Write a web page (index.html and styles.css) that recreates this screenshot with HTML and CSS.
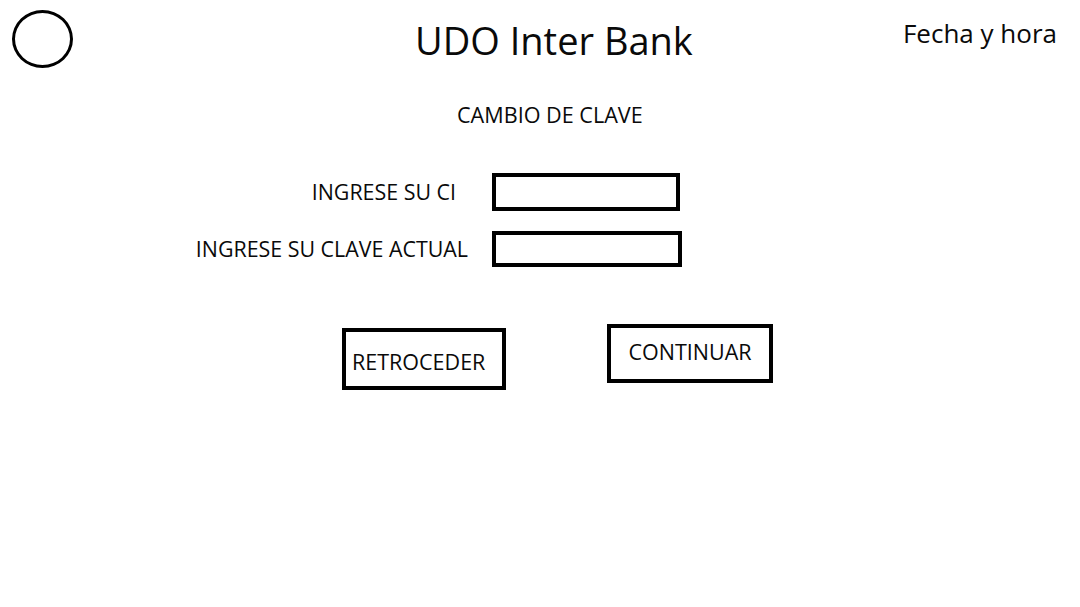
FILE: index.html
```html
<!DOCTYPE html>
<html lang="es">
<head>
<meta charset="utf-8">
<title>UDO Inter Bank</title>
<link rel="stylesheet" href="styles.css">
</head>
<body>
<div class="page">
  <header class="top">
    <div class="logo"></div>
    <h1 class="title">UDO Inter Bank</h1>
    <div class="datetime">Fecha y hora</div>
  </header>
  <h2 class="subtitle">CAMBIO DE CLAVE</h2>
  <form class="form">
    <label class="label label-ci" for="ci">INGRESE SU CI</label>
    <input class="field field-ci" id="ci" type="text">
    <label class="label label-clave" for="clave">INGRESE SU CLAVE ACTUAL</label>
    <input class="field field-clave" id="clave" type="password">
  </form>
  <div class="actions">
    <button class="btn btn-back" type="button">RETROCEDER</button>
    <button class="btn btn-next" type="button">CONTINUAR</button>
  </div>
</div>
</body>
</html>
```
FILE: styles.css
```css
* { box-sizing: border-box; }
html, body {
  margin: 0;
  padding: 0;
  background: #ffffff;
}
body {
  font-family: "Open Sans", "Noto Sans", sans-serif;
  color: #0a0a0a;
  width: 1080px;
  height: 607px;
  overflow: hidden;
}
.page {
  display: flex;
  flex-direction: column;
}
.top {
  display: flex;
  align-items: flex-start;
  height: 90px;
}
.logo {
  width: 61px;
  height: 58px;
  margin-left: 12px;
  margin-top: 10px;
  border: 3px solid #000;
  border-radius: 50%;
  flex: none;
}
.title {
  margin: 12px 0 0 342px;
  font-size: 38px;
  font-weight: 400;
  line-height: 56px;
  white-space: nowrap;
}
.datetime {
  margin: 16px 23px 0 auto;
  font-size: 26px;
  line-height: 34px;
  white-space: nowrap;
}
.subtitle {
  margin: 11px 0 0 457px;
  font-size: 21.6px;
  font-weight: 400;
  line-height: 28px;
}
.form {
  display: grid;
  grid-template-columns: 270px 188px;
  column-gap: 24px;
  row-gap: 20px;
  margin: 44px 0 0 198px;
  align-items: center;
}
.label {
  font-size: 21.4px;
  line-height: 28px;
  justify-self: end;
  white-space: nowrap;
}
.label-ci { margin-right: 12px; }
.field {
  height: 38px;
  border: 4px solid #000;
  border-radius: 0;
  background: #fff;
  outline: none;
  padding: 0;
}
.field-clave {
  width: 190px;
  height: 36px;
}
.actions {
  display: flex;
  align-items: flex-start;
  margin: 57px 0 0 342px;
}
.btn {
  font-family: inherit;
  color: #0a0a0a;
  background: #fff;
  border: 4px solid #000;
  border-radius: 0;
  font-size: 21.5px;
  line-height: 28px;
  padding: 0;
  cursor: pointer;
}
.btn-back {
  width: 164px;
  height: 62px;
  margin-top: 4px;
  text-align: left;
  padding: 16px 0 0 6px;
  display: flex;
  align-items: flex-start;
}
.btn-next {
  width: 166px;
  height: 59px;
  margin-left: 101px;
  display: flex;
  align-items: flex-start;
  justify-content: center;
  padding: 10px 0 0 0;
}
```
